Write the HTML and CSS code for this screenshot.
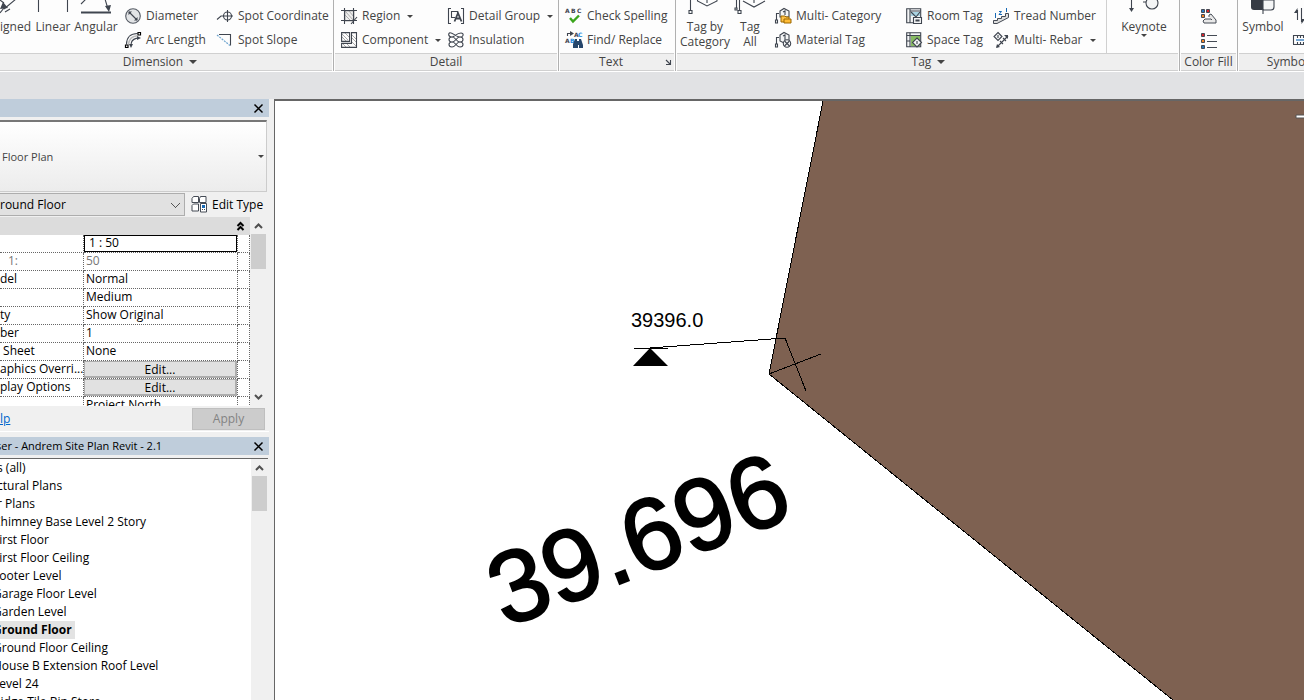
FILE: index.html
```html
<!DOCTYPE html>
<html lang="en">
<head>
<meta charset="utf-8">
<title>Andrem Site Plan Revit</title>
<link rel="stylesheet" href="styles.css">
</head>
<body>
<div class="app">
<header class="ribbon">
  <section class="group group-dimension">
    <div class="group-body">
      <button class="big big-aligned"><svg class="big-icon" width="32" height="16"><path class="ln" d="M24 -1L12 9M8 0L12 3M13 12L18 9"/><path class="hd" d="M11 2L16 8L8 9Z"/><path class="ln" d="M8 13L12 8"/></svg><span>ligned</span></button>
      <button class="big big-linear"><svg class="big-icon" width="32" height="16"><path class="ln" d="M1.500 0V12M30.500 0V12"/></svg><span>Linear</span></button>
      <button class="big big-angular"><svg class="big-icon" width="32" height="16"><path class="ln thick" d="M1 12.500H31"/><path class="ln" d="M1 4L6 -1M25 -1L28 9"/><path class="hd" d="M25 6L31 5L29 12Z"/></svg><span>Angular</span></button>
      <div class="tools tools-dim-a">
        <button class="tool"><svg class="icon" viewBox="0 0 16 16"><circle cx="8" cy="8" r="7.300" fill="#e2e4e6" stroke="#555b64" stroke-width="1.100"/><path class="ln" d="M4 4L12 12"/><path class="hd" d="M3.500 3.500H7L3.500 7ZM12.500 12.500H9L12.500 9Z"/></svg><span>Diameter</span></button>
        <button class="tool"><svg class="icon" viewBox="0 0 16 16"><path class="ln" d="M1.500 12.500C1.500 5 6 1.500 12.500 1.500"/><path class="ln" d="M6 13C6 9 9 6 14 6" stroke-dasharray="9 0"/><path d="M3.500 12.500C4 7 7 4 12.500 3.700" fill="none" stroke="#bbb" stroke-width="1.500"/><path fill="#fff" stroke="#000" stroke-width="1.200" d="M13 .5h2.500v2.500h-2.500zM.5 13h2.500v2.500h-2.500z"/><path class="hd" d="M4 12h4l-2 4zM12 4l4 2-4 2z"/></svg><span>Arc Length</span></button>
      </div>
      <div class="tools tools-dim-b">
        <button class="tool"><svg class="icon" viewBox="0 0 16 16"><path class="ln" d="M0 11.500L4 8H16M10.500 2V14"/><circle cx="10.500" cy="8" r="4" class="ln"/></svg><span>Spot Coordinate</span></button>
        <button class="tool"><svg class="icon" viewBox="0 0 16 16"><path class="ln" d="M2 2.500H13.500V13.500"/><path d="M0 3L13 13.500" fill="none" stroke="#6fa5cf" stroke-width="1.200" stroke-dasharray="2 1"/></svg><span>Spot Slope</span></button>
      </div>
    </div>
    <h2 class="group-title">Dimension <i class="caret caret-lg"></i></h2>
  </section>

  <section class="group group-detail">
    <div class="group-body">
      <div class="tools tools-det-a">
        <button class="tool"><svg class="icon" viewBox="0 0 16 16"><path fill="#eee" stroke="#999" stroke-width=".8" d="M4 3h9v10H4zM4 7l6 6M4 3l9 10M8 3l5 6"/><path class="ln" d="M0 2.500H16M0 12.500H16M3.500 0V16M12.500 0V16M16 9L10 16"/></svg><span>Region</span><i class="caret"></i></button>
        <button class="tool"><svg class="icon" viewBox="0 0 16 16"><path d="M1 2l6 6M1 5l4 4M4 1l4 4M10 2l5 5M10 5l5 5M10 9l5 5M2 12l3 3M6 12l3 3" stroke="#aaa"/><path class="ln" d="M.6.600h8v8.800h-8zM10.500.6h5v14.800H.6v-4h9.900z"/></svg><span>Component</span><i class="caret"></i></button>
      </div>
      <div class="tools">
        <button class="tool"><svg class="icon" viewBox="0 0 16 16"><path class="ln" d="M3 .5H.5V15.500H3M13 .5H15.500V15.500H13M7 9.500H3.500V3.500H9.500V5"/><path d="M6.500 13.500L10 5L13.500 13.500M8 10.500H12" fill="none" stroke="#3f454f" stroke-width="1.800"/></svg><span>Detail Group</span><i class="caret"></i></button>
        <button class="tool"><svg class="icon" viewBox="0 0 16 16"><path class="ln" d="M1 1C4 -1 7 5 12 5C16 5 16 1 13 1C8 1 7 5 4 5C0 5 0 1 2 1M4 5C8 5 8 10 12 10C16 10 16 5 12 5M12 5C8 5 8 10 4 10C0 10 0 5 4 5M4 10C8 10 8 15 12 15C16 15 16 10 12 10M12 10C8 10 8 15 4 15C0 15 0 10 4 10"/></svg><span>Insulation</span></button>
      </div>
    </div>
    <h2 class="group-title">Detail</h2>
  </section>

  <section class="group group-text">
    <div class="group-body">
      <div class="tools">
        <button class="tool"><svg class="icon" viewBox="0 0 16 16"><text x="-1" y="5" class="tiny">A</text><text x="5" y="5" class="tiny">B</text><text x="11" y="5" class="tiny">C</text><path d="M4 10l3 3.500L13 7.500" fill="none" stroke="#3ba51c" stroke-width="2.400"/></svg><span>Check Spelling</span></button>
        <button class="tool"><svg class="icon" viewBox="0 0 16 16"><path class="ln" d="M1.500 4V1.500H5"/><path class="hd" d="M4 -1l4 2.500-4 2.500z"/><text x="8" y="5" class="tiny">A</text><text x="12" y="5" class="tiny tiny-blue">C</text><text x="-1" y="11" class="tiny">A</text><text x="4" y="11" class="tiny tiny-blue">B</text><path fill="#26466b" d="M9 7h2v2h2V7h2l2 6v3h-4v-3h-1v3H7v-4z"/></svg><span>Find/ Replace</span></button>
      </div>
    </div>
    <h2 class="group-title">Text <svg class="launcher" width="5" height="5"><path d="M0 0L4 4M4.500 0V4.500H0" class="ln"/></svg></h2>
  </section>

  <section class="group group-tag">
    <div class="group-body">
      <button class="big big-tagcat"><svg class="big-icon" width="32" height="16"><path class="ln" d="M1.500 0V10M8.500 -2V1L18 6L28 1V-2M18 0V3"/><path class="ln" fill="#fff" d="M0 10.500h3v3H0z"/></svg><span>Tag by<br>Category</span></button>
      <button class="big big-tagall"><svg class="big-icon" width="32" height="16"><path class="ln" d="M2.500 0V9M5.500 0V10M9 1L20 7L31 1M20 0V3"/><path class="ln" fill="#fff" d="M4 10.500h3v3H4zM1 8h2v2H1z"/></svg><span>Tag<br>All</span></button>
      <div class="tools tools-tag-a">
        <button class="tool"><svg class="icon" viewBox="0 0 16 16"><path class="ln" d="M1.500 12V5.500H4"/><path class="ln" fill="#fff" d="M.5 12h2v3h-2zM5 3L9 .5 14 3V9H5z"/><path class="ln" d="M8 4l2-1v4"/><path d="M6 8h4l1 1h3v5H6z" fill="#ffc247" stroke="#9b6700"/><path d="M9 11h7v4H9z" fill="#ffbc36" stroke="#9b6700"/></svg><span>Multi- Category</span></button>
        <button class="tool"><svg class="icon" viewBox="0 0 16 16"><path class="ln" d="M1.500 12V5.500H4"/><path class="ln" fill="#fff" d="M.5 12h2v3h-2zM5 3L9 .5 14 3V9L9 11 5 9z"/><path class="ln" d="M8 4l2-1v5"/><circle class="ln" cx="12" cy="11.500" r="3.700" fill="#ddd"/><path class="ln" d="M9.500 9L14.500 14M14.500 9L9.500 14"/></svg><span>Material Tag</span></button>
      </div>
      <div class="tools tools-tag-b">
        <button class="tool"><svg class="icon" viewBox="0 0 16 16"><path class="ln" fill="#eef2f4" d="M.7.700h14v14H.7zM4 .7V15M4 3h11"/><path d="M5 4h9v4H5z" fill="#a9d3e2"/><path class="ln" d="M5 4l5 5 4-5"/><path class="ln" fill="#fff" d="M7.500 9.500h8v6h-8zM10 12h3v1h-3z"/></svg><span>Room Tag</span></button>
        <button class="tool"><svg class="icon" viewBox="0 0 16 16"><path class="ln" fill="#eee" d="M.7.700h14v14H.7z"/><path fill="#87bb63" d="M5 4h9v10H5z"/><path class="ln" d="M4 .7V15M.7 3.500h14M.7 9h3"/><path class="ln" fill="#fff" d="M11 6l4.500 4.500L11 15l-4.500-4.500zM11 9v3"/></svg><span>Space Tag</span></button>
      </div>
      <div class="tools tools-tag-c">
        <button class="tool"><svg class="icon" viewBox="0 0 16 16"><path fill="#ddd" stroke="#454b55" d="M.5 12.500h4v-2h4v-2h4v-3h3v4L4 15.500H.5z"/><path d="M2.500 5v5M6 3.500h2.500L6 6.500h3M13.500 0v4" fill="none" stroke="#1769b5"/></svg><span>Tread Number</span></button>
        <button class="tool"><svg class="icon" viewBox="0 0 16 16"><path class="ln" fill="#fff" d="M5 .5l4 4-4 4-4-4z"/><path class="ln" d="M5 3v3M4 15L15 4M7 9l3 3M10 6l3 3"/><path class="hd" d="M3 16l1-4 3 3zM15 3h-4l4 4z"/></svg><span>Multi- Rebar</span><i class="caret"></i></button>
      </div>
      <div class="divider"></div>
      <button class="big big-keynote"><svg class="big-icon" width="32" height="16"><path class="ln" d="M3.500 0V10M15 2h5"/><path class="hd" d="M1 8h5l-2.500 4z"/><circle class="ln" cx="24" cy="3" r="6" fill="#dde0e5"/></svg><span>Keynote</span><i class="caret"></i></button>
    </div>
    <h2 class="group-title">Tag <i class="caret caret-lg"></i></h2>
  </section>

  <section class="group group-fill">
    <div class="group-body">
      <div class="tools">
        <button class="tool" aria-label="Color Fill Legend"><svg class="icon" viewBox="0 0 16 16"><g stroke="#454b55"><path fill="#2476bd" d="M.5.500h3v3h-3z"/><path fill="#d8232a" d="M5.500.500h3v3h-3z"/><path fill="#f58220" d="M.5 5.500h3v3h-3z"/></g><path fill="#e8e8e8" stroke="#454b55" d="M8 8V6l2-1 5 6v3H3l-1-2 2-2h6l1 1"/></svg></button>
        <button class="tool" aria-label="Color Scheme"><svg class="icon" viewBox="0 0 16 16"><g stroke="#454b55"><path fill="#d8232a" d="M.5.500h3v3h-3z"/><path fill="#f58220" d="M.5 6.500h3v3h-3z"/><path fill="#2476bd" d="M.5 12.500h3v3h-3z"/><path d="M6 2.500h10M6 8.500h10M6 14.500h10"/></g></svg></button>
      </div>
    </div>
    <h2 class="group-title">Color Fill</h2>
  </section>

  <section class="group group-symbol">
    <div class="group-body">
      <button class="big big-symbol"><svg class="big-icon" width="32" height="16"><path d="M4 0h12v10H7q-3 0-3-3z" fill="#363b44"/><path class="ln" fill="#e8eaed" d="M16 0h11v7q0 3-3 3h-8z"/><path class="ln" d="M16 9v5"/></svg><span>Symbol</span></button>
      <div class="tools">
        <button class="tool" aria-label="Span Direction"><svg class="icon" viewBox="0 0 16 16"><path class="ln" d="M3.500 12V2M7.500 0V14"/><path class="hd" d="M3.500 0v5H0zM7.500 16v-5H11z"/></svg></button>
        <button class="tool" aria-label="Area"><svg class="icon" viewBox="0 0 16 16"><path class="ln" d="M-1 3.500H16M-1 12.500H16M-.5 3v9M3.500 3v3M6.500 3v3M9.500 3v3M3.500 10v3M6.500 10v3M9.500 10v3"/><path d="M2 8h14" stroke="#1769b5" stroke-width="1.200"/></svg></button>
      </div>
    </div>
    <h2 class="group-title">Symbol</h2>
  </section>
</header>

<main class="workspace">
  <aside class="dock">
    <section class="palette">
      <header class="palette-bar"><span></span><button class="close" aria-label="Close properties"><svg width="9" height="9"><path d="M.5.500L8.500 8.500M8.500.500L.5 8.500"/></svg></button></header>
      <button class="type-selector"><span>Floor Plan</span><i class="caret"></i></button>
      <div class="instance">
        <select class="instance-select" aria-label="Instance"><option>round Floor</option></select>
        <button class="edit-type"><svg width="17" height="17"><path fill="#fff" stroke="#454b55" d="M1 2.500l1.500-2h5v6H1zM8.500 2.500l1-2H15v6H8.500zM1 9.500l1.500-1.500h5v7H1z"/><path fill="#fff" stroke="#454b55" d="M9.500 7.500h6v8.500h-6z"/><path fill="#1769b5" d="M11 9h3v3h-3z"/><path stroke="#454b55" d="M11 13.500h1M13 13.500h1"/></svg>Edit Type</button>
      </div>
      <div class="props">
        <div class="props-main">
          <div class="props-head"><svg width="7" height="9"><path d="M.5 4L3.500 1L6.500 4M.5 8L3.500 5L6.500 8"/></svg></div>
          <table class="props-table">
            <colgroup><col class="col-name"><col class="col-value"><col></colgroup>
            <tr><th></th><td class="field"><input aria-label="View Scale" value="1 : 50"></td><td></td></tr>
            <tr class="muted"><th class="indent">1:</th><td>50</td><td></td></tr>
            <tr><th>del</th><td>Normal</td><td></td></tr>
            <tr><th></th><td>Medium</td><td></td></tr>
            <tr><th>ty</th><td>Show Original</td><td></td></tr>
            <tr><th>ber</th><td>1</td><td></td></tr>
            <tr><th>&nbsp;Sheet</th><td>None</td><td></td></tr>
            <tr><th>aphics Overri...</th><td class="field"><button>Edit...</button></td><td></td></tr>
            <tr><th>play Options</th><td class="field"><button>Edit...</button></td><td></td></tr>
            <tr><th></th><td>Project North</td><td></td></tr>
          </table>
        </div>
        <div class="scroll"><svg width="9" height="6"><path d="M1 5L4.500 1.500L8 5"/></svg><div class="thumb"></div><svg class="down" width="9" height="6"><path d="M1 1L4.500 4.500L8 1"/></svg></div>
      </div>
      <footer class="palette-foot"><a href="#help">lp</a><button class="apply" disabled>Apply</button></footer>
    </section>
    <section class="palette browser">
      <header class="palette-bar"><span>ser - Andrem Site Plan Revit - 2.1</span><button class="close" aria-label="Close browser"><svg width="9" height="9"><path d="M.5.500L8.500 8.500M8.500.500L.5 8.500"/></svg></button></header>
      <div class="tree-wrap">
        <ul class="tree">
          <li>s (all)</li><li>ctural Plans</li><li>r Plans</li>
          <li>Chimney Base Level 2 Story</li><li>First Floor</li><li>First Floor Ceiling</li><li>Footer Level</li><li>Garage Floor Level</li><li>Garden Level</li>
          <li><b>Ground Floor</b></li>
          <li>Ground Floor Ceiling</li><li>House B Extension Roof Level</li><li>Level 24</li><li>Ridge Tile Bin Store</li>
        </ul>
        <div class="scroll"><svg width="9" height="6"><path d="M1 5L4.500 1.500L8 5"/></svg><div class="thumb"></div></div>
      </div>
    </section>
  </aside>
  <section class="canvas" aria-label="Plan view">
    <svg class="drawing" width="100%" height="100%">
      <path class="slab" d="M554 -30L494 273L2494 1887V-30Z"/>
      <path class="edge" d="M554 -30L494 273L2494 1887"/>
      <path class="edge" d="M359 247.500H393M375 247L510 237L531 290M494 273L546 253"/>
      <path d="M375 247L393 265H358Z"/>
      <path d="M1021 14h12v3h-12z" fill="#fff" stroke="#555"/>
      <text class="level" x="356" y="226">39396.0</text>
      <text class="spot" transform="translate(230 527) rotate(-21)">39.696</text>
    </svg>
  </section>
</main>
</div>
</body>
</html>
```
FILE: styles.css
```css
* { box-sizing: border-box; }
body { margin: 0; background: #e1e2e4; color: #000; font: 12px/18px "Open Sans", "Noto Sans", sans-serif; }
button, input, select { font: inherit; color: inherit; border: 0; background: none; padding: 0; margin: 0; }
button { white-space: nowrap; }
svg { display: block; flex: none; overflow: visible; }
.app { height: 100vh; display: flex; flex-direction: column; overflow: hidden; }

/* Ribbon */
.ribbon { flex: none; display: flex; height: 72px; margin-bottom: 27px; overflow: hidden; background: #fdfdfd; color: #444; border-bottom: 1px solid #fff; }
.group { flex: none; display: flex; flex-direction: column; border-right: 1px solid #b0b0b0; padding-right: 1px; }
.group-body { flex: 1; display: flex; padding-top: 4px; }
.group-title { display: flex; align-items: center; justify-content: center; gap: 6px; height: 18px; margin: 0 0 0 1px; font-size: 12px; font-weight: 400; line-height: 16px; background: #efefef; border: solid #d0d0d0; border-width: 1px 0; }
.group-dimension { width: 334px; }
.group-dimension .group-title { margin-left: 0; padding-right: 12px; }
.group-detail { width: 225px; }
.group-text { width: 117px; }
.group-tag { width: 504px; }
.group-fill { width: 58px; }
.group-symbol { width: 100px; }
.tools { display: grid; grid-template-rows: 24px 24px; }
.tool { display: flex; align-items: center; gap: 5px; }
.tool .caret { margin-left: 2px; }
.icon { width: 16px; height: 16px; }
.ln { fill: none; stroke: #3f454f; stroke-width: 1.1; }
.ln[fill] { fill: #f4f5f6; }
.thick { stroke-width: 2; }
.hd { fill: #3f454f; }
.tiny { font: bold 6px "DejaVu Sans", sans-serif; fill: #3f454f; }
.tiny-blue { fill: #1c8adb; }
.caret { flex: none; width: 0; height: 0; border: solid transparent; border-width: 3px 3px 0; border-top-color: #444; }
.caret-lg { border-width: 4px 4px 0; border-top-color: #444; }
.big { display: flex; flex-direction: column; align-items: center; margin-top: -4px; line-height: 15px; }
.big-icon { margin-bottom: 3px; }
.big-aligned { width: 33px; align-items: flex-start; }
.big-aligned .big-icon { margin-left: -8px; }
.big-aligned span { margin-left: -3px; }
.big-linear { width: 40px; }
.big-angular { width: 46px; }
.tools-dim-a { width: 98px; padding-left: 6px; }
.tools-det-a { width: 107px; }
.group-detail .group-body { padding-left: 7px; }
.group-text .group-body { padding-left: 7px; }
.big-tagcat { width: 58px; }
.big-tagall { width: 32px; }
.tools-tag-a { width: 140px; padding-left: 9px; }
.tools-tag-b { width: 87px; }
.tools-tag-c { width: 113px; }
.divider { width: 1px; margin-top: -4px; background: #d0d0d0; }
.big-keynote { flex: 1; padding-left: 3px; }
.group-fill .tools { margin: auto; padding-left: 2px; }
.big-symbol { width: 50px; margin-right: 6px; }
.group-text .group-title { padding-left: 36px; gap: 43px; }
.group-tag .group-title { padding-left: 2px; }

/* Docked palettes */
.workspace { flex: 1; min-height: 0; display: flex; background: #f0f0f0; }
.dock { flex: none; width: 269px; display: flex; flex-direction: column; overflow: hidden; margin-right: 5px; }
.palette { flex: none; }
.palette-bar { height: 18px; display: flex; align-items: center; justify-content: space-between; padding-right: 6px; background: #bfcddb; font-size: 11px; margin-bottom: 3px; }
.palette-bar span { margin-left: -4px; }
.close svg path { fill: none; stroke: #000; stroke-width: 1.5; }
.type-selector { width: 267px; height: 72px; display: flex; align-items: center; justify-content: space-between; padding: 0 2px; font-size: 11px; color: #444; background: linear-gradient(#fff, #ececec); border: solid #ccc; border-width: 2px 1px 1px 0; border-top-color: #777; }
.instance { display: flex; align-items: center; height: 25px; gap: 6px; }
.instance-select { appearance: none; width: 185px; height: 23px; background: #e1e1e1; border: 1px solid #adadad; border-left: 0; background-image: linear-gradient(45deg, transparent 42%, #555 42%, #555 58%, transparent 58%), linear-gradient(-45deg, transparent 42%, #555 42%, #555 58%, transparent 58%); background-size: 5px 5px; background-position: 171px 9px, 175px 9px; background-repeat: no-repeat; }
.edit-type { display: flex; align-items: center; gap: 4px; line-height: 16px; }
.props { display: flex; height: 189px; overflow: hidden; }
.props-main { width: 250px; background: #fff; }
.props-head { height: 18px; display: flex; align-items: center; justify-content: flex-end; padding-right: 6px; background: #dcdcdc; }
.props-head path { fill: none; stroke: #000; stroke-width: 2; }
.props-table { width: 250px; table-layout: fixed; border-collapse: separate; border-spacing: 0; }
.col-name { width: 84px; }
.col-value { width: 154px; }
.props-table th, .props-table td { height: 18px; padding: 0 0 0 2px; line-height: 15px; vertical-align: top; text-align: left; font-weight: 400; white-space: nowrap; border: dotted #666; border-width: 0 1px 1px 0; }
.props-table th { padding-left: 0; }
.props-table th.indent { padding-left: 8px; }
.muted { color: #777; }
.props-table td.field { padding: 0; }
.field input { display: block; width: 100%; height: 17px; padding: 0 0 2px 4px; border: 1px solid #000; background: #fff; }
.field button { display: block; width: 100%; height: 17px; line-height: 13px; background: #e1e1e1; border: 1px solid #adadad; border-width: 1px 2px 2px 1px; }
.scroll { width: 17px; display: flex; flex-direction: column; align-items: center; padding-top: 6px; background: #f0f0f0; }
.scroll path { fill: none; stroke: #505050; stroke-width: 2; }
.thumb { width: 15px; height: 35px; margin-top: 5px; background: #cdcdcd; }
.down { margin-top: auto; margin-bottom: 6px; }
.palette-foot { height: 26px; display: flex; align-items: center; justify-content: space-between; padding-right: 4px; border-bottom: 1px solid #fff; }
.palette-foot a { color: #0066cc; }
.apply { width: 73px; height: 22px; background: #ccc; border: 1px solid #bfbfbf; color: #838383; }
.browser { flex: 1; min-height: 0; display: flex; flex-direction: column; margin-top: 5px; }
.browser .palette-bar { flex: none; }
.tree-wrap { flex: 1; min-height: 0; display: flex; width: 268px; background: #fff; border-top: 1px solid #666; overflow: hidden; }
.tree { flex: 1; margin: 0 0 0 -7px; padding: 0; list-style: none; white-space: nowrap; }
.tree li:nth-child(-n+3) { padding-left: 4px; }
.tree b { display: inline-block; padding-right: 3px; background: #e3e3e3; }

/* Plan view */
.canvas { flex: 1; min-width: 0; overflow: hidden; background: #fff; border: solid #666; border-width: 2px 0 0 1px; }
.drawing { overflow: hidden; }
.slab { fill: #7e6151; }
.edge { fill: none; stroke: #000; stroke-width: 1; shape-rendering: crispEdges; }
.level { font: 20px "Liberation Sans", Arial, sans-serif; }
.spot { font: 102px "Liberation Sans", Arial, sans-serif; stroke: #000; stroke-width: 2px; }
```
